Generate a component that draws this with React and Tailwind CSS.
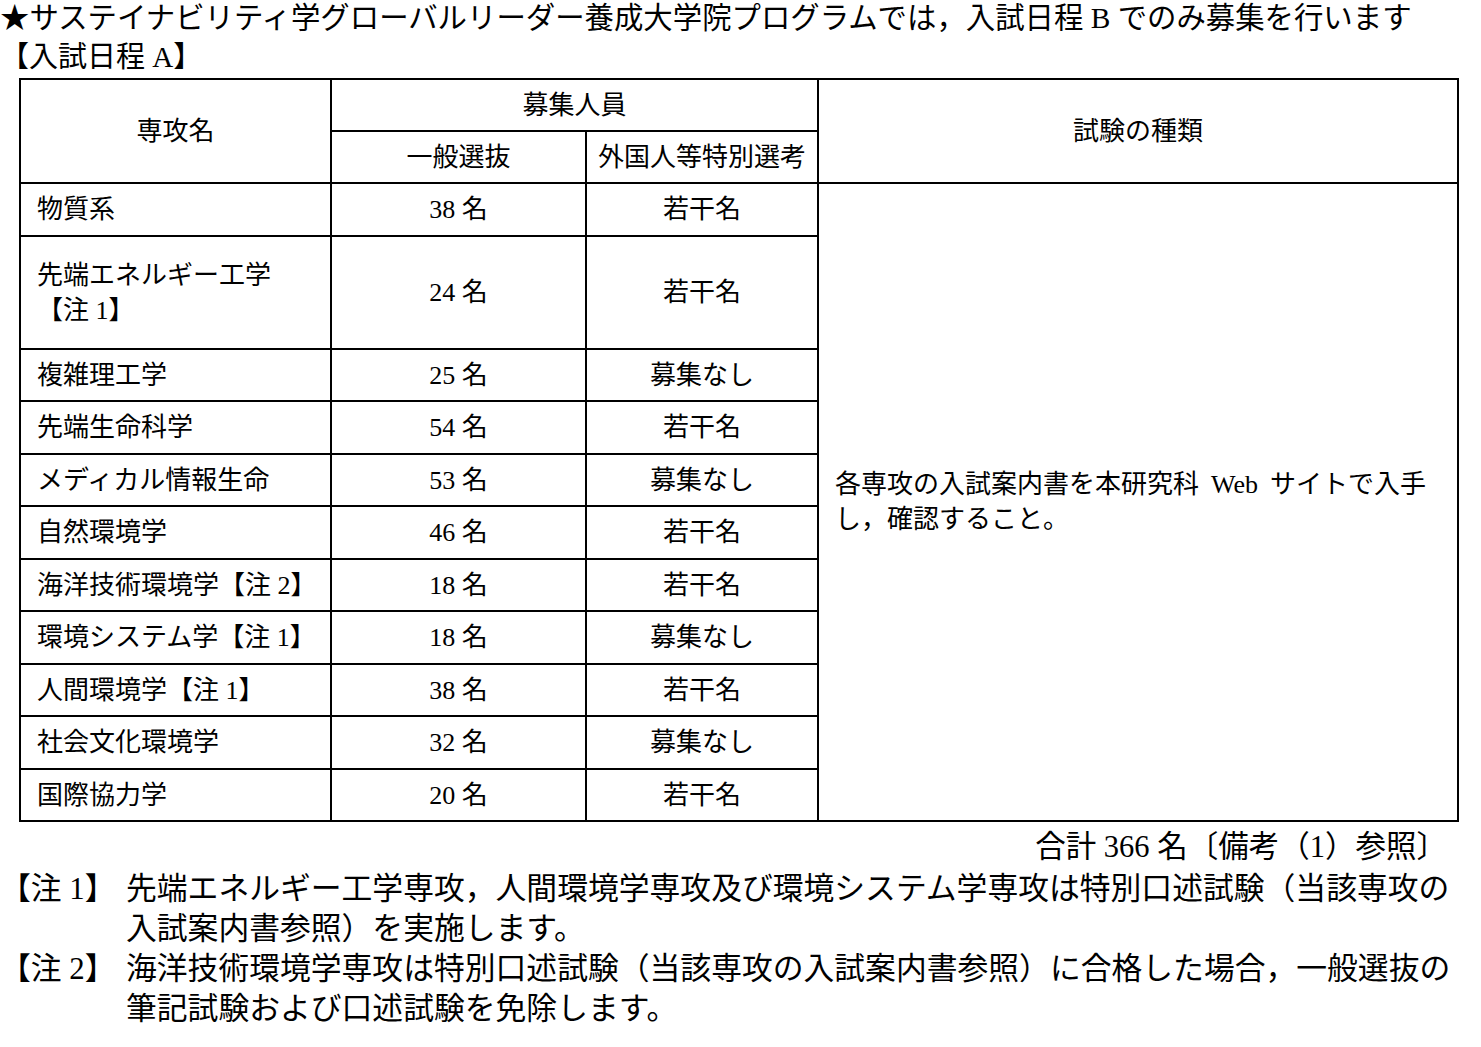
import React from 'react';

const majors = [
  { name: '物質系', general: '38 名', foreign: '若干名' },
  { name: ['先端エネルギー工学', '【注 1】'], general: '24 名', foreign: '若干名' },
  { name: '複雑理工学', general: '25 名', foreign: '募集なし' },
  { name: '先端生命科学', general: '54 名', foreign: '若干名' },
  { name: 'メディカル情報生命', general: '53 名', foreign: '募集なし' },
  { name: '自然環境学', general: '46 名', foreign: '若干名' },
  { name: '海洋技術環境学【注 2】', general: '18 名', foreign: '若干名' },
  { name: '環境システム学【注 1】', general: '18 名', foreign: '募集なし' },
  { name: '人間環境学【注 1】', general: '38 名', foreign: '若干名' },
  { name: '社会文化環境学', general: '32 名', foreign: '募集なし' },
  { name: '国際協力学', general: '20 名', foreign: '若干名' },
];

const notes = [
  {
    label: '【注 1】',
    lines: [
      '先端エネルギー工学専攻，人間環境学専攻及び環境システム学専攻は特別口述試験（当該専攻の',
      '入試案内書参照）を実施します。',
    ],
  },
  {
    label: '【注 2】',
    lines: [
      '海洋技術環境学専攻は特別口述試験（当該専攻の入試案内書参照）に合格した場合，一般選抜の',
      '筆記試験および口述試験を免除します。',
    ],
  },
];

export default function App() {
  const cell = 'bg-white flex items-center';

  return (
    <div className="min-h-screen bg-white text-black font-['Liberation_Serif','Noto_Sans_CJK_JP',serif]">
      {/* Heading */}
      <p className="text-[29.4px] leading-[37px] whitespace-nowrap">
        ★サステイナビリティ学グローバルリーダー養成大学院プログラムでは，入試日程 B でのみ募集を行います
      </p>
      <p className="text-[29px] leading-[41px]">【入試日程 A】</p>

      {/* Table */}
      <div className="ml-[19px] w-[1440px] bg-black p-[2px] gap-[2px] grid grid-cols-[309px_253px_230px_638px] grid-rows-[50px_50px_51px_111px_50px_51px_50px_51px_50px_51px_50px_51px_50px] text-[26px] leading-[35px]">
        <div className={`${cell} justify-center row-span-2`}>専攻名</div>
        <div className={`${cell} justify-center col-span-2`}>募集人員</div>
        <div className={`${cell} justify-center row-span-2`}>試験の種類</div>
        <div className={`${cell} justify-center`}>一般選抜</div>
        <div className={`${cell} justify-center`}>外国人等特別選考</div>

        <div className={`${cell} col-start-4 row-start-3 row-span-11 pl-[16px]`}>
          <p className="whitespace-nowrap">
            各専攻の入試案内書を本研究科<span className="mx-[12px]">Web</span>サイトで入手
            <br />
            し，確認すること。
          </p>
        </div>

        {majors.map((m, i) => (
          <React.Fragment key={i}>
            <div className={`${cell} col-start-1 pl-[16px]`}>
              {Array.isArray(m.name) ? (
                <p>
                  {m.name[0]}
                  <br />
                  {m.name[1]}
                </p>
              ) : (
                <p className="whitespace-nowrap">{m.name}</p>
              )}
            </div>
            <div className={`${cell} justify-center`}>{m.general}</div>
            <div className={`${cell} justify-center`}>{m.foreign}</div>
          </React.Fragment>
        ))}
      </div>

      {/* Total */}
      <p className="pt-[5px] pr-[34px] text-right text-[30.5px] leading-[40px] whitespace-nowrap">
        合計 366 名〔備考（1）参照〕
      </p>

      {/* Notes */}
      <div className="mt-[2px] text-[30.8px] leading-[40px]">
        {notes.map((n) => (
          <div key={n.label} className="flex">
            <span className="w-[126px] shrink-0 whitespace-nowrap">{n.label}</span>
            <p className="whitespace-nowrap">
              {n.lines[0]}
              <br />
              {n.lines[1]}
            </p>
          </div>
        ))}
      </div>
    </div>
  );
}
